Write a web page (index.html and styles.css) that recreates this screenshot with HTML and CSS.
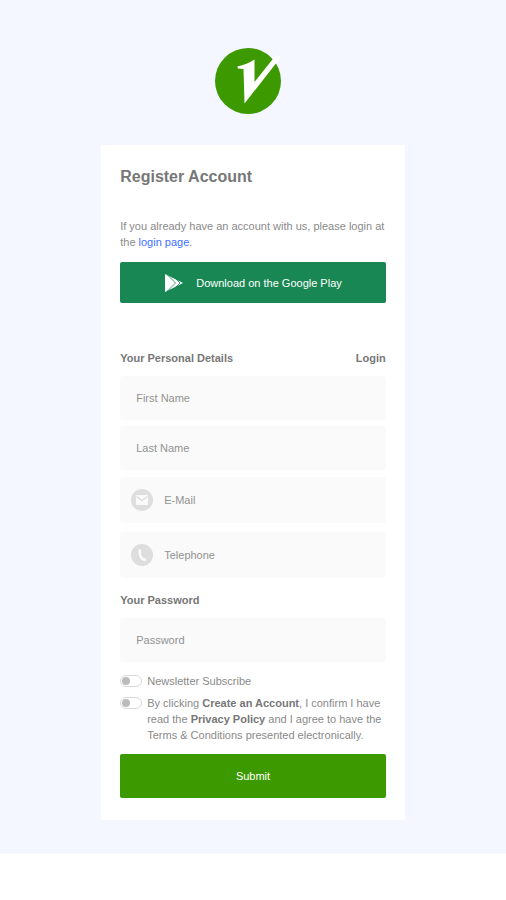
FILE: index.html
```html
<!DOCTYPE html>
<html lang="en">
<head>
<meta charset="utf-8">
<meta name="viewport" content="width=device-width, initial-scale=1">
<title>Register Account</title>
<link rel="stylesheet" href="styles.css">
</head>
<body>
<main class="page">
  <svg class="logo" viewBox="0 0 76 66" aria-hidden="true">
    <circle cx="33" cy="33" r="33" fill="#3c9a00"/>
    <path fill="#fff" d="M22.300 18.500 Q32 16.500 39.500 11.500 L39.500 34 L61 7 L66 9 L29.500 55.500 L28.500 21 L23 20.500Z"/>
  </svg>
  <section class="card">
    <h1 class="title">Register Account</h1>
    <p class="intro">If you already have an account with us, please login at the <a class="link" href="#">login page</a>.</p>
    <button class="button store" type="button">
      <svg class="play" viewBox="0 0 20 20" aria-hidden="true">
        <path fill="#fff" d="M1 1 L19 10 L1 19Z"/>
        <path fill="none" stroke="#198754" stroke-width=".8" d="M3 1.500 L11.500 10 L3 18.500 M12 6 L16 10 L12 14"/>
      </svg>
      <span>Download on the Google Play</span>
    </button>
    <form class="form">
      <div class="section-head">
        <h2 class="subtitle">Your Personal Details</h2>
        <a class="login" href="#">Login</a>
      </div>
      <div class="fields">
        <label class="field"><input class="input" type="text" placeholder="First Name" aria-label="First Name"></label>
        <label class="field"><input class="input" type="text" placeholder="Last Name" aria-label="Last Name"></label>
      </div>
      <div class="fields contact">
        <label class="field with-icon">
          <svg class="icon" viewBox="0 0 22 22" aria-hidden="true">
            <circle cx="11" cy="11" r="11" fill="#dedede"/>
            <rect x="5" y="6" width="12" height="10" rx="1" fill="#fafafa"/>
            <path d="M5.500 7.500 L11 11.500 L16.500 7.500" fill="none" stroke="#dedede" stroke-width="1.500"/>
          </svg>
          <input class="input" type="email" placeholder="E-Mail" aria-label="E-Mail">
        </label>
        <label class="field with-icon">
          <svg class="icon" viewBox="0 0 22 22" aria-hidden="true">
            <circle cx="11" cy="11" r="11" fill="#dedede"/>
            <path d="M7.500 5.500 L9.500 5 L10.500 8.500 L9.800 9.500 Q10.500 12 12 13.800 L13.300 13.500 L15.500 16 L14 17.300 Q10 16.500 8.300 12.500 Q7 9 7.500 5.500Z" fill="#fafafa"/>
          </svg>
          <input class="input" type="tel" placeholder="Telephone" aria-label="Telephone">
        </label>
      </div>
      <h2 class="subtitle password-title">Your Password</h2>
      <label class="field"><input class="input" type="password" placeholder="Password" aria-label="Password"></label>
      <div class="options">
        <label class="option">
          <input class="switch" type="checkbox">
          <span>Newsletter Subscribe</span>
        </label>
        <label class="option">
          <input class="switch" type="checkbox">
          <span>By clicking <b>Create an Account</b>, I confirm I have read the <b>Privacy Policy</b> and I agree to have the Terms &amp; Conditions presented electronically.</span>
        </label>
      </div>
      <button class="button submit" type="submit">Submit</button>
    </form>
  </section>
</main>
</body>
</html>
```
FILE: styles.css
```css
* {
  box-sizing: border-box;
}

body {
  margin: 0;
  background: #fff;
  color: #8a8a8a;
  font: 11px/16px "Liberation Sans", Arial, sans-serif;
}

.page {
  display: flex;
  flex-direction: column;
  align-items: center;
  padding: 48px 0 34px;
  background: #f4f7ff;
}

.logo {
  width: 76px;
  margin-bottom: 31px;
}

.card {
  width: 60%;
  min-width: 300px;
  padding: 22px 19px;
  background: #fff;
}

.title {
  margin: 0 0 31px;
  color: #777;
  font-size: 16px;
  line-height: 20px;
}

.intro {
  margin: 0 0 12px;
}

.link {
  color: #3f6fff;
  text-decoration: none;
}

.button {
  display: flex;
  align-items: center;
  justify-content: center;
  width: 100%;
  border: 0;
  border-radius: 2px;
  color: #fff;
  font: inherit;
}

.store {
  gap: 12px;
  height: 41px;
  margin-bottom: 47px;
  background: #198754;
}

.play {
  width: 20px;
  height: 20px;
}

.section-head {
  display: flex;
  justify-content: space-between;
  margin-bottom: 10px;
}

.subtitle,
.login {
  margin: 0;
  color: #777;
  font-size: 11px;
  font-weight: bold;
  text-decoration: none;
}

.fields {
  display: grid;
  gap: 6px;
  margin-bottom: 7px;
}

.contact {
  gap: 9px;
  margin-bottom: 14px;
}

.field {
  display: flex;
  align-items: center;
  height: 44px;
  padding: 0 16px;
  border-radius: 4px;
  background: #fafafa;
}

.with-icon {
  gap: 11px;
  height: 46px;
  padding: 0 11px;
}

.icon {
  flex: none;
  width: 22px;
  height: 22px;
}

.input {
  flex: 1;
  min-width: 0;
  padding: 0;
  border: 0;
  outline: 0;
  background: transparent;
  color: inherit;
  font: inherit;
}

.input::placeholder {
  color: #929292;
  opacity: 1;
}

.password-title {
  margin-bottom: 10px;
}

.options {
  display: grid;
  gap: 6px;
  margin: 11px 0;
}

.option {
  display: flex;
  align-items: flex-start;
  gap: 5px;
}

.switch {
  flex: none;
  display: flex;
  align-items: center;
  width: 22px;
  height: 12px;
  margin: 2px 0;
  padding: 0 1px;
  border: 1px solid #dadada;
  border-radius: 6px;
  appearance: none;
}

.switch::before {
  width: 8px;
  height: 8px;
  border-radius: 50%;
  background: #bbb;
  content: "";
}

.switch:checked {
  justify-content: flex-end;
}

.option b {
  color: #777;
}

.submit {
  height: 44px;
  background: #3c9a00;
}
```
